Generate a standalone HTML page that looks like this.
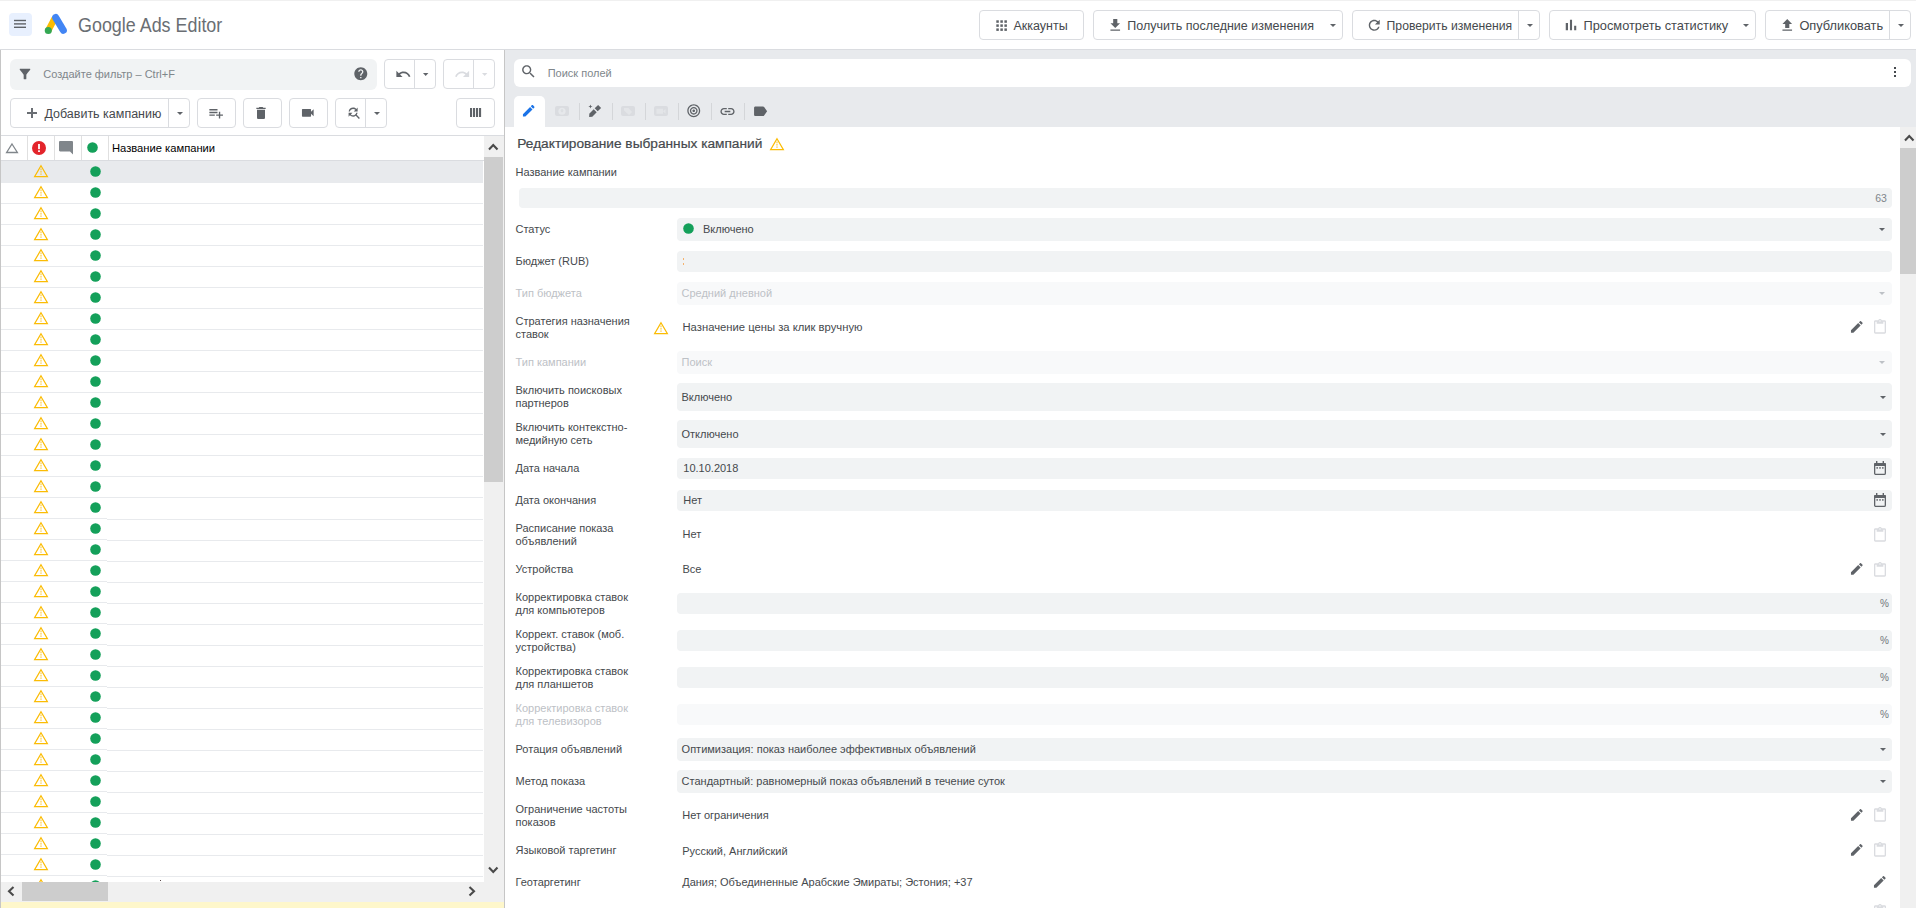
<!DOCTYPE html>
<html><head><meta charset="utf-8"><title>Google Ads Editor</title>
<style>
*{margin:0;padding:0;box-sizing:border-box}
html,body{width:1916px;height:908px;overflow:hidden;background:#fff;font-family:"Liberation Sans",sans-serif;color:#3c4043}
body{position:relative}
.a{position:absolute;display:block}
.t{position:absolute;white-space:nowrap}
.btn{position:absolute;border:1px solid #dadce0;border-radius:4px;background:#fff}
.inp{position:absolute;background:#f1f3f4;border-radius:4px}
.inpd{position:absolute;background:#f8f9fa;border-radius:4px}
</style></head><body>

<div class="a" style="left:0px;top:0px;width:1916px;height:1px;background:#f0f0f0;"></div>
<div class="a" style="left:9px;top:13px;width:23px;height:23px;background:#e8f0fe;border-radius:4px"></div>
<svg class="a" style="left:9px;top:13px;" width="23" height="23" viewBox="0 0 23 23"><rect x="5" y="6.8" width="12" height="1.4" fill="#5f6368"/><rect x="5" y="10.2" width="12" height="1.4" fill="#5f6368"/><rect x="5" y="13.6" width="12" height="1.4" fill="#5f6368"/></svg>
<svg class="a" style="left:43px;top:12px;" width="26" height="24" viewBox="0 0 26 24"><line x1="11.6" y1="6.6" x2="5.3" y2="18.5" stroke="#fbbc04" stroke-width="6.4" stroke-linecap="butt"/><line x1="12.7" y1="5.6" x2="20.3" y2="18.3" stroke="#4285f4" stroke-width="7.1" stroke-linecap="round"/><circle cx="5.3" cy="18.5" r="3.55" fill="#34a853"/></svg>
<div class="t" style="left:78px;top:15.00px;font-size:20px;line-height:20px;color:#6a6e73;font-weight:400;transform:scaleX(0.895);transform-origin:0 0">Google Ads Editor</div>
<div class="btn" style="left:979px;top:10px;width:105px;height:30px"></div>
<svg class="a" style="left:995.5px;top:19.5px;" width="11" height="11" viewBox="0 0 11 11"><rect x="0.30" y="0.30" width="2.5" height="2.5" fill="#5f6368"/><rect x="0.30" y="4.35" width="2.5" height="2.5" fill="#5f6368"/><rect x="0.30" y="8.40" width="2.5" height="2.5" fill="#5f6368"/><rect x="4.35" y="0.30" width="2.5" height="2.5" fill="#5f6368"/><rect x="4.35" y="4.35" width="2.5" height="2.5" fill="#5f6368"/><rect x="4.35" y="8.40" width="2.5" height="2.5" fill="#5f6368"/><rect x="8.40" y="0.30" width="2.5" height="2.5" fill="#5f6368"/><rect x="8.40" y="4.35" width="2.5" height="2.5" fill="#5f6368"/><rect x="8.40" y="8.40" width="2.5" height="2.5" fill="#5f6368"/></svg>
<div class="t" style="left:1013.5px;top:20.00px;font-size:12.5px;line-height:12.5px;color:#45494d;font-weight:400;">Аккаунты</div>
<div class="btn" style="left:1093px;top:10px;width:250px;height:30px"></div>
<svg class="a" style="left:1106.5px;top:16.5px;" width="16.5" height="16.5" viewBox="0 0 24 24"><path d="M19 9h-4V3H9v6H5l7 7 7-7zM5 18v2h14v-2H5z" fill="#5f6368"/></svg>
<div class="t" style="left:1127.3px;top:20.00px;font-size:12.5px;line-height:12.5px;color:#45494d;font-weight:400;">Получить последние изменения</div>
<svg class="a" style="left:1330px;top:24px;" width="6" height="3" viewBox="0 0 6 3"><polygon points="0,0 6,0 3.0,3" fill="#5f6368"/></svg>
<div class="btn" style="left:1352px;top:10px;width:188px;height:30px"></div>
<div class="a" style="left:1518px;top:11px;width:1px;height:28px;background:#dadce0;"></div>
<svg class="a" style="left:1365.5px;top:16.5px;" width="16.5" height="16.5" viewBox="0 0 24 24"><path d="M17.65 6.35C16.2 4.9 14.21 4 12 4c-4.42 0-7.99 3.58-7.99 8s3.57 8 7.99 8c3.73 0 6.84-2.55 7.73-6h-2.08c-.82 2.33-3.04 4-5.65 4-3.31 0-6-2.69-6-6s2.69-6 6-6c1.66 0 3.14.69 4.22 1.78L13 11h7V4l-2.35 2.35z" fill="#5f6368"/></svg>
<div class="t" style="left:1386.6px;top:20.00px;font-size:12.2px;line-height:12.2px;color:#45494d;font-weight:400;">Проверить изменения</div>
<svg class="a" style="left:1527px;top:24px;" width="6" height="3" viewBox="0 0 6 3"><polygon points="0,0 6,0 3.0,3" fill="#5f6368"/></svg>
<div class="btn" style="left:1549px;top:10px;width:207px;height:30px"></div>
<svg class="a" style="left:1562px;top:16px;" width="18" height="18" viewBox="0 0 24 24"><path d="M5 9.2h3V19H5zM10.6 5h2.8v14h-2.8zm5.6 8H19v6h-2.8z" fill="#5f6368"/></svg>
<div class="t" style="left:1583.5px;top:20.00px;font-size:12.8px;line-height:12.8px;color:#45494d;font-weight:400;">Просмотреть статистику</div>
<svg class="a" style="left:1743px;top:24px;" width="6" height="3" viewBox="0 0 6 3"><polygon points="0,0 6,0 3.0,3" fill="#5f6368"/></svg>
<div class="btn" style="left:1765px;top:10px;width:146px;height:30px"></div>
<div class="a" style="left:1889px;top:11px;width:1px;height:28px;background:#dadce0;"></div>
<svg class="a" style="left:1778.5px;top:16.5px;" width="16.5" height="16.5" viewBox="0 0 24 24"><path d="M5 20h14v-2H5v2zm0-10h4v6h6v-6h4l-7-7-7 7z" fill="#5f6368"/></svg>
<div class="t" style="left:1799.4px;top:20.00px;font-size:12.8px;line-height:12.8px;color:#45494d;font-weight:400;">Опубликовать</div>
<svg class="a" style="left:1898px;top:24px;" width="6" height="3" viewBox="0 0 6 3"><polygon points="0,0 6,0 3.0,3" fill="#5f6368"/></svg>
<div class="a" style="left:0px;top:49px;width:1916px;height:1px;background:#dadce0;"></div>
<div class="a" style="left:0px;top:50px;width:1px;height:858px;background:#c6c6c6;"></div>
<div class="a" style="left:504px;top:50px;width:1px;height:858px;background:#c6c6c6;"></div>
<div class="a" style="left:10px;top:59px;width:367px;height:31px;background:#f1f3f4;border-radius:6px"></div>
<svg class="a" style="left:16.5px;top:65.5px;" width="16" height="16" viewBox="0 0 24 24"><path d="M4.25 5.61C6.27 8.2 10 13 10 13v6c0 .55.45 1 1 1h2c.55 0 1-.45 1-1v-6s3.72-4.8 5.74-7.39c.51-.66.04-1.61-.79-1.61H5.04c-.83 0-1.3.95-.79 1.61z" fill="#5f6368"/></svg>
<div class="t" style="left:43.3px;top:69.00px;font-size:11px;line-height:11px;color:#80868b;font-weight:400;">Создайте фильтр – Ctrl+F</div>
<svg class="a" style="left:353.2px;top:66.2px;" width="15.6" height="15.6" viewBox="0 0 24 24"><path d="M12 2C6.48 2 2 6.48 2 12s4.48 10 10 10 10-4.48 10-10S17.52 2 12 2zm1 17h-2v-2h2v2zm2.07-7.75l-.9.92C13.45 12.9 13 13.5 13 15h-2v-.5c0-1.1.45-2.1 1.17-2.83l1.240-1.26c.37-.36.59-.86.59-1.41 0-1.1-.9-2-2-2s-2 .9-2 2H8c0-2.21 1.79-4 4-4s4 1.79 4 4c0 .88-.36 1.68-.93 2.25z" fill="#5f6368"/></svg>
<div class="btn" style="left:384px;top:59px;width:52px;height:30px"></div>
<div class="a" style="left:414px;top:60px;width:1px;height:28px;background:#dadce0;"></div>
<svg class="a" style="left:395.1px;top:65.8px;" width="16.5" height="16.5" viewBox="0 0 24 24"><path d="M12.5 8c-2.65 0-5.05.99-6.9 2.6L2 7v9h9l-3.62-3.62c1.39-1.16 3.16-1.880 5.12-1.88 3.54 0 6.55 2.31 7.6 5.5l2.37-.78C21.08 11.03 17.15 8 12.5 8z" fill="#5f6368"/></svg>
<svg class="a" style="left:423.2px;top:72.7px;" width="5.4" height="3" viewBox="0 0 5.4 3"><polygon points="0,0 5.4,0 2.7,3" fill="#5f6368"/></svg>
<div class="btn" style="left:443px;top:59px;width:52px;height:30px"></div>
<div class="a" style="left:473px;top:60px;width:1px;height:28px;background:#dadce0;"></div>
<svg class="a" style="left:454.1px;top:65.8px;" width="16.5" height="16.5" viewBox="0 0 24 24"><path d="M18.4 10.6C16.55 8.99 14.15 8 11.5 8c-4.65 0-8.58 3.03-9.96 7.22L3.9 16c1.05-3.19 4.05-5.5 7.6-5.5 1.95 0 3.73.72 5.12 1.88L13 16h9V7l-3.6 3.6z" fill="#dadce0"/></svg>
<svg class="a" style="left:482.2px;top:72.7px;" width="5.4" height="3" viewBox="0 0 5.4 3"><polygon points="0,0 5.4,0 2.7,3" fill="#dadce0"/></svg>
<div class="btn" style="left:10px;top:98px;width:180px;height:30px"></div>
<div class="a" style="left:168px;top:99px;width:1px;height:28px;background:#dadce0;"></div>
<div class="a" style="left:27px;top:112.2px;width:10px;height:1.7px;background:#6a6e73;"></div>
<div class="a" style="left:31.1px;top:108px;width:1.7px;height:10px;background:#6a6e73;"></div>
<div class="t" style="left:44.4px;top:108.00px;font-size:12.5px;line-height:12.5px;color:#45494d;font-weight:400;">Добавить кампанию</div>
<svg class="a" style="left:176.5px;top:111.5px;" width="6" height="3" viewBox="0 0 6 3"><polygon points="0,0 6,0 3.0,3" fill="#5f6368"/></svg>
<div class="btn" style="left:197px;top:98px;width:39px;height:30px"></div>
<svg class="a" style="left:207.6px;top:104.5px;" width="16.3" height="16.3" viewBox="0 0 24 24"><path d="M14 10H2v2h12v-2zm0-4H2v2h12V6zm4 8v-4h-2v4h-4v2h4v4h2v-4h4v-2h-4zM2 16h8v-2H2v2z" fill="#5f6368"/></svg>
<div class="btn" style="left:243px;top:98px;width:39px;height:30px"></div>
<svg class="a" style="left:253.3px;top:104.8px;" width="16" height="16" viewBox="0 0 24 24"><path d="M6 19c0 1.1.9 2 2 2h8c1.1 0 2-.9 2-2V7H6v12zM19 4h-3.5l-1-1h-5l-1 1H5v2h14V4z" fill="#5f6368"/></svg>
<div class="btn" style="left:289px;top:98px;width:39px;height:30px"></div>
<svg class="a" style="left:300px;top:104.9px;" width="15.6" height="15.6" viewBox="0 0 24 24"><path d="M17 10.5V7c0-.55-.45-1-1-1H4c-.55 0-1 .45-1 1v10c0 .55.45 1 1 1h12c.55 0 1-.45 1-1v-3.5l4 4v-11l-4 4z" fill="#5f6368"/></svg>
<div class="btn" style="left:335px;top:98px;width:52px;height:30px"></div>
<div class="a" style="left:365px;top:99px;width:1px;height:28px;background:#dadce0;"></div>
<svg class="a" style="left:346.2px;top:105.2px;" width="15.5" height="15.5" viewBox="0 0 24 24"><path d="M11 6c1.38 0 2.63.56 3.54 1.46L12 10h6V4l-2.05 2.05C14.68 4.78 12.930 4 11 4c-3.53 0-6.43 2.61-6.92 6H6.1c.46-2.28 2.48-4 4.9-4zm5.64 9.14c.66-.9 1.12-1.97 1.28-3.14H15.9c-.46 2.28-2.48 4-4.9 4-1.38 0-2.63-.56-3.54-1.46L10 12H4v6l2.05-2.05C7.32 17.22 9.07 18 11 18c1.55 0 2.98-.51 4.14-1.36L20 21.49 21.49 20l-4.85-4.86z" fill="#5f6368"/></svg>
<svg class="a" style="left:373.5px;top:111.5px;" width="6" height="3" viewBox="0 0 6 3"><polygon points="0,0 6,0 3.0,3" fill="#5f6368"/></svg>
<div class="btn" style="left:456px;top:98px;width:39px;height:30px"></div>
<svg class="a" style="left:470px;top:108px;" width="12" height="9" viewBox="0 0 12 9"><rect x="0" y="0" width="2.1" height="9" fill="#5f6368"/><rect x="3" y="0" width="2.1" height="9" fill="#5f6368"/><rect x="6" y="0" width="2.1" height="9" fill="#5f6368"/><rect x="9" y="0" width="2.1" height="9" fill="#5f6368"/></svg>
<div class="a" style="left:1px;top:135px;width:503px;height:1px;background:#dadce0;"></div>
<div class="a" style="left:1px;top:160px;width:483px;height:1px;background:#dadce0;"></div>
<div class="a" style="left:27px;top:136px;width:1px;height:24px;background:#e0e0e0;"></div>
<div class="a" style="left:54px;top:136px;width:1px;height:24px;background:#e0e0e0;"></div>
<div class="a" style="left:81px;top:136px;width:1px;height:24px;background:#e0e0e0;"></div>
<div class="a" style="left:108px;top:136px;width:1px;height:24px;background:#e0e0e0;"></div>
<svg class="a" style="left:5px;top:142px;" width="14" height="12" viewBox="0 0 14 12"><polygon points="7,2 12.4,10.5 1.6,10.5" fill="none" stroke="#80868b" stroke-width="1.3" stroke-linejoin="miter"/></svg>
<svg class="a" style="left:32px;top:141px;" width="14" height="14" viewBox="0 0 14 14"><circle cx="7" cy="7" r="7" fill="#e3242b"/><rect x="6.1" y="3" width="1.8" height="5.2" fill="#fff"/><rect x="6.1" y="9.3" width="1.8" height="1.7" fill="#fff"/></svg>
<svg class="a" style="left:59px;top:141px;" width="15" height="14" viewBox="0 0 15 14"><path d="M1.2 0h11.6c.7 0 1.2.5 1.2 1.2V13.5L11 10.5H1.2C.5 10.5 0 10 0 9.3V1.2C0 .5.5 0 1.2 0z" fill="#80868b"/></svg>
<svg class="a" style="left:87.2px;top:142.2px;" width="11" height="11" viewBox="0 0 11 11"><circle cx="5.5" cy="5.5" r="5.3" fill="#14a05a"/></svg>
<div class="t" style="left:112px;top:143.00px;font-size:11.2px;line-height:11.2px;color:#000;font-weight:400;">Название кампании</div>
<div class="a" style="left:1px;top:161px;width:482px;height:21px;background:#e8eaed;"></div>
<svg class="a" style="left:33px;top:163.8px;" width="16" height="14" viewBox="0 0 16 14"><polygon points="8,1.8 14.4,12.7 1.6,12.7" fill="none" stroke="#fbbc04" stroke-width="1.2"/><rect x="7.45" y="4.5" width="1.1" height="1.7" fill="#fbbc04" opacity="0.8"/><rect x="7.45" y="6.9" width="1.1" height="1.7" fill="#fbbc04" opacity="0.8"/><rect x="7.45" y="9.5" width="1.1" height="1.2" fill="#fbbc04"/></svg>
<svg class="a" style="left:89.6px;top:165.6px;" width="11" height="11" viewBox="0 0 11 11"><circle cx="5.5" cy="5.5" r="5.3" fill="#14a05a"/></svg>
<div class="a" style="left:1px;top:182px;width:106px;height:1px;background:#e8eaed;"></div>
<div class="a" style="left:107px;top:182px;width:376px;height:1px;background:#e8eaed;"></div>
<svg class="a" style="left:33px;top:184.8px;" width="16" height="14" viewBox="0 0 16 14"><polygon points="8,1.8 14.4,12.7 1.6,12.7" fill="none" stroke="#fbbc04" stroke-width="1.2"/><rect x="7.45" y="4.5" width="1.1" height="1.7" fill="#fbbc04" opacity="0.8"/><rect x="7.45" y="6.9" width="1.1" height="1.7" fill="#fbbc04" opacity="0.8"/><rect x="7.45" y="9.5" width="1.1" height="1.2" fill="#fbbc04"/></svg>
<svg class="a" style="left:89.6px;top:186.6px;" width="11" height="11" viewBox="0 0 11 11"><circle cx="5.5" cy="5.5" r="5.3" fill="#14a05a"/></svg>
<div class="a" style="left:1px;top:203px;width:106px;height:1px;background:#e8eaed;"></div>
<div class="a" style="left:107px;top:203px;width:376px;height:1px;background:#e8eaed;"></div>
<svg class="a" style="left:33px;top:205.8px;" width="16" height="14" viewBox="0 0 16 14"><polygon points="8,1.8 14.4,12.7 1.6,12.7" fill="none" stroke="#fbbc04" stroke-width="1.2"/><rect x="7.45" y="4.5" width="1.1" height="1.7" fill="#fbbc04" opacity="0.8"/><rect x="7.45" y="6.9" width="1.1" height="1.7" fill="#fbbc04" opacity="0.8"/><rect x="7.45" y="9.5" width="1.1" height="1.2" fill="#fbbc04"/></svg>
<svg class="a" style="left:89.6px;top:207.6px;" width="11" height="11" viewBox="0 0 11 11"><circle cx="5.5" cy="5.5" r="5.3" fill="#14a05a"/></svg>
<div class="a" style="left:1px;top:224px;width:106px;height:1px;background:#e8eaed;"></div>
<div class="a" style="left:107px;top:224px;width:376px;height:1px;background:#e8eaed;"></div>
<svg class="a" style="left:33px;top:226.8px;" width="16" height="14" viewBox="0 0 16 14"><polygon points="8,1.8 14.4,12.7 1.6,12.7" fill="none" stroke="#fbbc04" stroke-width="1.2"/><rect x="7.45" y="4.5" width="1.1" height="1.7" fill="#fbbc04" opacity="0.8"/><rect x="7.45" y="6.9" width="1.1" height="1.7" fill="#fbbc04" opacity="0.8"/><rect x="7.45" y="9.5" width="1.1" height="1.2" fill="#fbbc04"/></svg>
<svg class="a" style="left:89.6px;top:228.6px;" width="11" height="11" viewBox="0 0 11 11"><circle cx="5.5" cy="5.5" r="5.3" fill="#14a05a"/></svg>
<div class="a" style="left:1px;top:245px;width:106px;height:1px;background:#e8eaed;"></div>
<div class="a" style="left:107px;top:245px;width:376px;height:1px;background:#e8eaed;"></div>
<svg class="a" style="left:33px;top:247.8px;" width="16" height="14" viewBox="0 0 16 14"><polygon points="8,1.8 14.4,12.7 1.6,12.7" fill="none" stroke="#fbbc04" stroke-width="1.2"/><rect x="7.45" y="4.5" width="1.1" height="1.7" fill="#fbbc04" opacity="0.8"/><rect x="7.45" y="6.9" width="1.1" height="1.7" fill="#fbbc04" opacity="0.8"/><rect x="7.45" y="9.5" width="1.1" height="1.2" fill="#fbbc04"/></svg>
<svg class="a" style="left:89.6px;top:249.6px;" width="11" height="11" viewBox="0 0 11 11"><circle cx="5.5" cy="5.5" r="5.3" fill="#14a05a"/></svg>
<div class="a" style="left:1px;top:266px;width:106px;height:1px;background:#e8eaed;"></div>
<div class="a" style="left:107px;top:266px;width:376px;height:1px;background:#e8eaed;"></div>
<svg class="a" style="left:33px;top:268.8px;" width="16" height="14" viewBox="0 0 16 14"><polygon points="8,1.8 14.4,12.7 1.6,12.7" fill="none" stroke="#fbbc04" stroke-width="1.2"/><rect x="7.45" y="4.5" width="1.1" height="1.7" fill="#fbbc04" opacity="0.8"/><rect x="7.45" y="6.9" width="1.1" height="1.7" fill="#fbbc04" opacity="0.8"/><rect x="7.45" y="9.5" width="1.1" height="1.2" fill="#fbbc04"/></svg>
<svg class="a" style="left:89.6px;top:270.6px;" width="11" height="11" viewBox="0 0 11 11"><circle cx="5.5" cy="5.5" r="5.3" fill="#14a05a"/></svg>
<div class="a" style="left:1px;top:287px;width:106px;height:1px;background:#e8eaed;"></div>
<div class="a" style="left:107px;top:287px;width:376px;height:1px;background:#e8eaed;"></div>
<svg class="a" style="left:33px;top:289.8px;" width="16" height="14" viewBox="0 0 16 14"><polygon points="8,1.8 14.4,12.7 1.6,12.7" fill="none" stroke="#fbbc04" stroke-width="1.2"/><rect x="7.45" y="4.5" width="1.1" height="1.7" fill="#fbbc04" opacity="0.8"/><rect x="7.45" y="6.9" width="1.1" height="1.7" fill="#fbbc04" opacity="0.8"/><rect x="7.45" y="9.5" width="1.1" height="1.2" fill="#fbbc04"/></svg>
<svg class="a" style="left:89.6px;top:291.6px;" width="11" height="11" viewBox="0 0 11 11"><circle cx="5.5" cy="5.5" r="5.3" fill="#14a05a"/></svg>
<div class="a" style="left:1px;top:308px;width:106px;height:1px;background:#e8eaed;"></div>
<div class="a" style="left:107px;top:308px;width:376px;height:1px;background:#e8eaed;"></div>
<svg class="a" style="left:33px;top:310.8px;" width="16" height="14" viewBox="0 0 16 14"><polygon points="8,1.8 14.4,12.7 1.6,12.7" fill="none" stroke="#fbbc04" stroke-width="1.2"/><rect x="7.45" y="4.5" width="1.1" height="1.7" fill="#fbbc04" opacity="0.8"/><rect x="7.45" y="6.9" width="1.1" height="1.7" fill="#fbbc04" opacity="0.8"/><rect x="7.45" y="9.5" width="1.1" height="1.2" fill="#fbbc04"/></svg>
<svg class="a" style="left:89.6px;top:312.6px;" width="11" height="11" viewBox="0 0 11 11"><circle cx="5.5" cy="5.5" r="5.3" fill="#14a05a"/></svg>
<div class="a" style="left:1px;top:329px;width:106px;height:1px;background:#e8eaed;"></div>
<div class="a" style="left:107px;top:329px;width:376px;height:1px;background:#e8eaed;"></div>
<svg class="a" style="left:33px;top:331.8px;" width="16" height="14" viewBox="0 0 16 14"><polygon points="8,1.8 14.4,12.7 1.6,12.7" fill="none" stroke="#fbbc04" stroke-width="1.2"/><rect x="7.45" y="4.5" width="1.1" height="1.7" fill="#fbbc04" opacity="0.8"/><rect x="7.45" y="6.9" width="1.1" height="1.7" fill="#fbbc04" opacity="0.8"/><rect x="7.45" y="9.5" width="1.1" height="1.2" fill="#fbbc04"/></svg>
<svg class="a" style="left:89.6px;top:333.6px;" width="11" height="11" viewBox="0 0 11 11"><circle cx="5.5" cy="5.5" r="5.3" fill="#14a05a"/></svg>
<div class="a" style="left:1px;top:350px;width:106px;height:1px;background:#e8eaed;"></div>
<div class="a" style="left:107px;top:350px;width:376px;height:1px;background:#e8eaed;"></div>
<svg class="a" style="left:33px;top:352.8px;" width="16" height="14" viewBox="0 0 16 14"><polygon points="8,1.8 14.4,12.7 1.6,12.7" fill="none" stroke="#fbbc04" stroke-width="1.2"/><rect x="7.45" y="4.5" width="1.1" height="1.7" fill="#fbbc04" opacity="0.8"/><rect x="7.45" y="6.9" width="1.1" height="1.7" fill="#fbbc04" opacity="0.8"/><rect x="7.45" y="9.5" width="1.1" height="1.2" fill="#fbbc04"/></svg>
<svg class="a" style="left:89.6px;top:354.6px;" width="11" height="11" viewBox="0 0 11 11"><circle cx="5.5" cy="5.5" r="5.3" fill="#14a05a"/></svg>
<div class="a" style="left:1px;top:371px;width:106px;height:1px;background:#e8eaed;"></div>
<div class="a" style="left:107px;top:371px;width:376px;height:1px;background:#e8eaed;"></div>
<svg class="a" style="left:33px;top:373.8px;" width="16" height="14" viewBox="0 0 16 14"><polygon points="8,1.8 14.4,12.7 1.6,12.7" fill="none" stroke="#fbbc04" stroke-width="1.2"/><rect x="7.45" y="4.5" width="1.1" height="1.7" fill="#fbbc04" opacity="0.8"/><rect x="7.45" y="6.9" width="1.1" height="1.7" fill="#fbbc04" opacity="0.8"/><rect x="7.45" y="9.5" width="1.1" height="1.2" fill="#fbbc04"/></svg>
<svg class="a" style="left:89.6px;top:375.6px;" width="11" height="11" viewBox="0 0 11 11"><circle cx="5.5" cy="5.5" r="5.3" fill="#14a05a"/></svg>
<div class="a" style="left:1px;top:392px;width:106px;height:1px;background:#e8eaed;"></div>
<div class="a" style="left:107px;top:392px;width:376px;height:1px;background:#e8eaed;"></div>
<svg class="a" style="left:33px;top:394.8px;" width="16" height="14" viewBox="0 0 16 14"><polygon points="8,1.8 14.4,12.7 1.6,12.7" fill="none" stroke="#fbbc04" stroke-width="1.2"/><rect x="7.45" y="4.5" width="1.1" height="1.7" fill="#fbbc04" opacity="0.8"/><rect x="7.45" y="6.9" width="1.1" height="1.7" fill="#fbbc04" opacity="0.8"/><rect x="7.45" y="9.5" width="1.1" height="1.2" fill="#fbbc04"/></svg>
<svg class="a" style="left:89.6px;top:396.6px;" width="11" height="11" viewBox="0 0 11 11"><circle cx="5.5" cy="5.5" r="5.3" fill="#14a05a"/></svg>
<div class="a" style="left:1px;top:413px;width:106px;height:1px;background:#e8eaed;"></div>
<div class="a" style="left:107px;top:413px;width:376px;height:1px;background:#e8eaed;"></div>
<svg class="a" style="left:33px;top:415.8px;" width="16" height="14" viewBox="0 0 16 14"><polygon points="8,1.8 14.4,12.7 1.6,12.7" fill="none" stroke="#fbbc04" stroke-width="1.2"/><rect x="7.45" y="4.5" width="1.1" height="1.7" fill="#fbbc04" opacity="0.8"/><rect x="7.45" y="6.9" width="1.1" height="1.7" fill="#fbbc04" opacity="0.8"/><rect x="7.45" y="9.5" width="1.1" height="1.2" fill="#fbbc04"/></svg>
<svg class="a" style="left:89.6px;top:417.6px;" width="11" height="11" viewBox="0 0 11 11"><circle cx="5.5" cy="5.5" r="5.3" fill="#14a05a"/></svg>
<div class="a" style="left:1px;top:434px;width:106px;height:1px;background:#e8eaed;"></div>
<div class="a" style="left:107px;top:434px;width:376px;height:1px;background:#e8eaed;"></div>
<svg class="a" style="left:33px;top:436.8px;" width="16" height="14" viewBox="0 0 16 14"><polygon points="8,1.8 14.4,12.7 1.6,12.7" fill="none" stroke="#fbbc04" stroke-width="1.2"/><rect x="7.45" y="4.5" width="1.1" height="1.7" fill="#fbbc04" opacity="0.8"/><rect x="7.45" y="6.9" width="1.1" height="1.7" fill="#fbbc04" opacity="0.8"/><rect x="7.45" y="9.5" width="1.1" height="1.2" fill="#fbbc04"/></svg>
<svg class="a" style="left:89.6px;top:438.6px;" width="11" height="11" viewBox="0 0 11 11"><circle cx="5.5" cy="5.5" r="5.3" fill="#14a05a"/></svg>
<div class="a" style="left:1px;top:455px;width:106px;height:1px;background:#e8eaed;"></div>
<div class="a" style="left:107px;top:455px;width:376px;height:1px;background:#e8eaed;"></div>
<svg class="a" style="left:33px;top:457.8px;" width="16" height="14" viewBox="0 0 16 14"><polygon points="8,1.8 14.4,12.7 1.6,12.7" fill="none" stroke="#fbbc04" stroke-width="1.2"/><rect x="7.45" y="4.5" width="1.1" height="1.7" fill="#fbbc04" opacity="0.8"/><rect x="7.45" y="6.9" width="1.1" height="1.7" fill="#fbbc04" opacity="0.8"/><rect x="7.45" y="9.5" width="1.1" height="1.2" fill="#fbbc04"/></svg>
<svg class="a" style="left:89.6px;top:459.6px;" width="11" height="11" viewBox="0 0 11 11"><circle cx="5.5" cy="5.5" r="5.3" fill="#14a05a"/></svg>
<div class="a" style="left:1px;top:476px;width:106px;height:1px;background:#e8eaed;"></div>
<div class="a" style="left:107px;top:476px;width:376px;height:1px;background:#e8eaed;"></div>
<svg class="a" style="left:33px;top:478.8px;" width="16" height="14" viewBox="0 0 16 14"><polygon points="8,1.8 14.4,12.7 1.6,12.7" fill="none" stroke="#fbbc04" stroke-width="1.2"/><rect x="7.45" y="4.5" width="1.1" height="1.7" fill="#fbbc04" opacity="0.8"/><rect x="7.45" y="6.9" width="1.1" height="1.7" fill="#fbbc04" opacity="0.8"/><rect x="7.45" y="9.5" width="1.1" height="1.2" fill="#fbbc04"/></svg>
<svg class="a" style="left:89.6px;top:480.6px;" width="11" height="11" viewBox="0 0 11 11"><circle cx="5.5" cy="5.5" r="5.3" fill="#14a05a"/></svg>
<div class="a" style="left:1px;top:497px;width:106px;height:1px;background:#e8eaed;"></div>
<div class="a" style="left:107px;top:497px;width:376px;height:1px;background:#e8eaed;"></div>
<svg class="a" style="left:33px;top:499.8px;" width="16" height="14" viewBox="0 0 16 14"><polygon points="8,1.8 14.4,12.7 1.6,12.7" fill="none" stroke="#fbbc04" stroke-width="1.2"/><rect x="7.45" y="4.5" width="1.1" height="1.7" fill="#fbbc04" opacity="0.8"/><rect x="7.45" y="6.9" width="1.1" height="1.7" fill="#fbbc04" opacity="0.8"/><rect x="7.45" y="9.5" width="1.1" height="1.2" fill="#fbbc04"/></svg>
<svg class="a" style="left:89.6px;top:501.6px;" width="11" height="11" viewBox="0 0 11 11"><circle cx="5.5" cy="5.5" r="5.3" fill="#14a05a"/></svg>
<div class="a" style="left:1px;top:518px;width:106px;height:1px;background:#e8eaed;"></div>
<div class="a" style="left:107px;top:519px;width:376px;height:1px;background:#e8eaed;"></div>
<svg class="a" style="left:33px;top:520.8px;" width="16" height="14" viewBox="0 0 16 14"><polygon points="8,1.8 14.4,12.7 1.6,12.7" fill="none" stroke="#fbbc04" stroke-width="1.2"/><rect x="7.45" y="4.5" width="1.1" height="1.7" fill="#fbbc04" opacity="0.8"/><rect x="7.45" y="6.9" width="1.1" height="1.7" fill="#fbbc04" opacity="0.8"/><rect x="7.45" y="9.5" width="1.1" height="1.2" fill="#fbbc04"/></svg>
<svg class="a" style="left:89.6px;top:522.6px;" width="11" height="11" viewBox="0 0 11 11"><circle cx="5.5" cy="5.5" r="5.3" fill="#14a05a"/></svg>
<div class="a" style="left:1px;top:539px;width:106px;height:1px;background:#e8eaed;"></div>
<div class="a" style="left:107px;top:540px;width:376px;height:1px;background:#e8eaed;"></div>
<svg class="a" style="left:33px;top:541.8px;" width="16" height="14" viewBox="0 0 16 14"><polygon points="8,1.8 14.4,12.7 1.6,12.7" fill="none" stroke="#fbbc04" stroke-width="1.2"/><rect x="7.45" y="4.5" width="1.1" height="1.7" fill="#fbbc04" opacity="0.8"/><rect x="7.45" y="6.9" width="1.1" height="1.7" fill="#fbbc04" opacity="0.8"/><rect x="7.45" y="9.5" width="1.1" height="1.2" fill="#fbbc04"/></svg>
<svg class="a" style="left:89.6px;top:543.6px;" width="11" height="11" viewBox="0 0 11 11"><circle cx="5.5" cy="5.5" r="5.3" fill="#14a05a"/></svg>
<div class="a" style="left:1px;top:560px;width:106px;height:1px;background:#e8eaed;"></div>
<div class="a" style="left:107px;top:561px;width:376px;height:1px;background:#e8eaed;"></div>
<svg class="a" style="left:33px;top:562.8px;" width="16" height="14" viewBox="0 0 16 14"><polygon points="8,1.8 14.4,12.7 1.6,12.7" fill="none" stroke="#fbbc04" stroke-width="1.2"/><rect x="7.45" y="4.5" width="1.1" height="1.7" fill="#fbbc04" opacity="0.8"/><rect x="7.45" y="6.9" width="1.1" height="1.7" fill="#fbbc04" opacity="0.8"/><rect x="7.45" y="9.5" width="1.1" height="1.2" fill="#fbbc04"/></svg>
<svg class="a" style="left:89.6px;top:564.6px;" width="11" height="11" viewBox="0 0 11 11"><circle cx="5.5" cy="5.5" r="5.3" fill="#14a05a"/></svg>
<div class="a" style="left:1px;top:581px;width:106px;height:1px;background:#e8eaed;"></div>
<div class="a" style="left:107px;top:582px;width:376px;height:1px;background:#e8eaed;"></div>
<svg class="a" style="left:33px;top:583.8px;" width="16" height="14" viewBox="0 0 16 14"><polygon points="8,1.8 14.4,12.7 1.6,12.7" fill="none" stroke="#fbbc04" stroke-width="1.2"/><rect x="7.45" y="4.5" width="1.1" height="1.7" fill="#fbbc04" opacity="0.8"/><rect x="7.45" y="6.9" width="1.1" height="1.7" fill="#fbbc04" opacity="0.8"/><rect x="7.45" y="9.5" width="1.1" height="1.2" fill="#fbbc04"/></svg>
<svg class="a" style="left:89.6px;top:585.6px;" width="11" height="11" viewBox="0 0 11 11"><circle cx="5.5" cy="5.5" r="5.3" fill="#14a05a"/></svg>
<div class="a" style="left:1px;top:602px;width:106px;height:1px;background:#e8eaed;"></div>
<div class="a" style="left:107px;top:603px;width:376px;height:1px;background:#e8eaed;"></div>
<svg class="a" style="left:33px;top:604.8px;" width="16" height="14" viewBox="0 0 16 14"><polygon points="8,1.8 14.4,12.7 1.6,12.7" fill="none" stroke="#fbbc04" stroke-width="1.2"/><rect x="7.45" y="4.5" width="1.1" height="1.7" fill="#fbbc04" opacity="0.8"/><rect x="7.45" y="6.9" width="1.1" height="1.7" fill="#fbbc04" opacity="0.8"/><rect x="7.45" y="9.5" width="1.1" height="1.2" fill="#fbbc04"/></svg>
<svg class="a" style="left:89.6px;top:606.6px;" width="11" height="11" viewBox="0 0 11 11"><circle cx="5.5" cy="5.5" r="5.3" fill="#14a05a"/></svg>
<div class="a" style="left:1px;top:623px;width:106px;height:1px;background:#e8eaed;"></div>
<div class="a" style="left:107px;top:624px;width:376px;height:1px;background:#e8eaed;"></div>
<svg class="a" style="left:33px;top:625.8px;" width="16" height="14" viewBox="0 0 16 14"><polygon points="8,1.8 14.4,12.7 1.6,12.7" fill="none" stroke="#fbbc04" stroke-width="1.2"/><rect x="7.45" y="4.5" width="1.1" height="1.7" fill="#fbbc04" opacity="0.8"/><rect x="7.45" y="6.9" width="1.1" height="1.7" fill="#fbbc04" opacity="0.8"/><rect x="7.45" y="9.5" width="1.1" height="1.2" fill="#fbbc04"/></svg>
<svg class="a" style="left:89.6px;top:627.6px;" width="11" height="11" viewBox="0 0 11 11"><circle cx="5.5" cy="5.5" r="5.3" fill="#14a05a"/></svg>
<div class="a" style="left:1px;top:644px;width:106px;height:1px;background:#e8eaed;"></div>
<div class="a" style="left:107px;top:645px;width:376px;height:1px;background:#e8eaed;"></div>
<svg class="a" style="left:33px;top:646.8px;" width="16" height="14" viewBox="0 0 16 14"><polygon points="8,1.8 14.4,12.7 1.6,12.7" fill="none" stroke="#fbbc04" stroke-width="1.2"/><rect x="7.45" y="4.5" width="1.1" height="1.7" fill="#fbbc04" opacity="0.8"/><rect x="7.45" y="6.9" width="1.1" height="1.7" fill="#fbbc04" opacity="0.8"/><rect x="7.45" y="9.5" width="1.1" height="1.2" fill="#fbbc04"/></svg>
<svg class="a" style="left:89.6px;top:648.6px;" width="11" height="11" viewBox="0 0 11 11"><circle cx="5.5" cy="5.5" r="5.3" fill="#14a05a"/></svg>
<div class="a" style="left:1px;top:665px;width:106px;height:1px;background:#e8eaed;"></div>
<div class="a" style="left:107px;top:666px;width:376px;height:1px;background:#e8eaed;"></div>
<svg class="a" style="left:33px;top:667.8px;" width="16" height="14" viewBox="0 0 16 14"><polygon points="8,1.8 14.4,12.7 1.6,12.7" fill="none" stroke="#fbbc04" stroke-width="1.2"/><rect x="7.45" y="4.5" width="1.1" height="1.7" fill="#fbbc04" opacity="0.8"/><rect x="7.45" y="6.9" width="1.1" height="1.7" fill="#fbbc04" opacity="0.8"/><rect x="7.45" y="9.5" width="1.1" height="1.2" fill="#fbbc04"/></svg>
<svg class="a" style="left:89.6px;top:669.6px;" width="11" height="11" viewBox="0 0 11 11"><circle cx="5.5" cy="5.5" r="5.3" fill="#14a05a"/></svg>
<div class="a" style="left:1px;top:686px;width:106px;height:1px;background:#e8eaed;"></div>
<div class="a" style="left:107px;top:687px;width:376px;height:1px;background:#e8eaed;"></div>
<svg class="a" style="left:33px;top:688.8px;" width="16" height="14" viewBox="0 0 16 14"><polygon points="8,1.8 14.4,12.7 1.6,12.7" fill="none" stroke="#fbbc04" stroke-width="1.2"/><rect x="7.45" y="4.5" width="1.1" height="1.7" fill="#fbbc04" opacity="0.8"/><rect x="7.45" y="6.9" width="1.1" height="1.7" fill="#fbbc04" opacity="0.8"/><rect x="7.45" y="9.5" width="1.1" height="1.2" fill="#fbbc04"/></svg>
<svg class="a" style="left:89.6px;top:690.6px;" width="11" height="11" viewBox="0 0 11 11"><circle cx="5.5" cy="5.5" r="5.3" fill="#14a05a"/></svg>
<div class="a" style="left:1px;top:707px;width:106px;height:1px;background:#e8eaed;"></div>
<div class="a" style="left:107px;top:708px;width:376px;height:1px;background:#e8eaed;"></div>
<svg class="a" style="left:33px;top:709.8px;" width="16" height="14" viewBox="0 0 16 14"><polygon points="8,1.8 14.4,12.7 1.6,12.7" fill="none" stroke="#fbbc04" stroke-width="1.2"/><rect x="7.45" y="4.5" width="1.1" height="1.7" fill="#fbbc04" opacity="0.8"/><rect x="7.45" y="6.9" width="1.1" height="1.7" fill="#fbbc04" opacity="0.8"/><rect x="7.45" y="9.5" width="1.1" height="1.2" fill="#fbbc04"/></svg>
<svg class="a" style="left:89.6px;top:711.6px;" width="11" height="11" viewBox="0 0 11 11"><circle cx="5.5" cy="5.5" r="5.3" fill="#14a05a"/></svg>
<div class="a" style="left:1px;top:728px;width:106px;height:1px;background:#e8eaed;"></div>
<div class="a" style="left:107px;top:729px;width:376px;height:1px;background:#e8eaed;"></div>
<svg class="a" style="left:33px;top:730.8px;" width="16" height="14" viewBox="0 0 16 14"><polygon points="8,1.8 14.4,12.7 1.6,12.7" fill="none" stroke="#fbbc04" stroke-width="1.2"/><rect x="7.45" y="4.5" width="1.1" height="1.7" fill="#fbbc04" opacity="0.8"/><rect x="7.45" y="6.9" width="1.1" height="1.7" fill="#fbbc04" opacity="0.8"/><rect x="7.45" y="9.5" width="1.1" height="1.2" fill="#fbbc04"/></svg>
<svg class="a" style="left:89.6px;top:732.6px;" width="11" height="11" viewBox="0 0 11 11"><circle cx="5.5" cy="5.5" r="5.3" fill="#14a05a"/></svg>
<div class="a" style="left:1px;top:749px;width:106px;height:1px;background:#e8eaed;"></div>
<div class="a" style="left:107px;top:750px;width:376px;height:1px;background:#e8eaed;"></div>
<svg class="a" style="left:33px;top:751.8px;" width="16" height="14" viewBox="0 0 16 14"><polygon points="8,1.8 14.4,12.7 1.6,12.7" fill="none" stroke="#fbbc04" stroke-width="1.2"/><rect x="7.45" y="4.5" width="1.1" height="1.7" fill="#fbbc04" opacity="0.8"/><rect x="7.45" y="6.9" width="1.1" height="1.7" fill="#fbbc04" opacity="0.8"/><rect x="7.45" y="9.5" width="1.1" height="1.2" fill="#fbbc04"/></svg>
<svg class="a" style="left:89.6px;top:753.6px;" width="11" height="11" viewBox="0 0 11 11"><circle cx="5.5" cy="5.5" r="5.3" fill="#14a05a"/></svg>
<div class="a" style="left:1px;top:770px;width:106px;height:1px;background:#e8eaed;"></div>
<div class="a" style="left:107px;top:771px;width:376px;height:1px;background:#e8eaed;"></div>
<svg class="a" style="left:33px;top:772.8px;" width="16" height="14" viewBox="0 0 16 14"><polygon points="8,1.8 14.4,12.7 1.6,12.7" fill="none" stroke="#fbbc04" stroke-width="1.2"/><rect x="7.45" y="4.5" width="1.1" height="1.7" fill="#fbbc04" opacity="0.8"/><rect x="7.45" y="6.9" width="1.1" height="1.7" fill="#fbbc04" opacity="0.8"/><rect x="7.45" y="9.5" width="1.1" height="1.2" fill="#fbbc04"/></svg>
<svg class="a" style="left:89.6px;top:774.6px;" width="11" height="11" viewBox="0 0 11 11"><circle cx="5.5" cy="5.5" r="5.3" fill="#14a05a"/></svg>
<div class="a" style="left:1px;top:791px;width:106px;height:1px;background:#e8eaed;"></div>
<div class="a" style="left:107px;top:792px;width:376px;height:1px;background:#e8eaed;"></div>
<svg class="a" style="left:33px;top:793.8px;" width="16" height="14" viewBox="0 0 16 14"><polygon points="8,1.8 14.4,12.7 1.6,12.7" fill="none" stroke="#fbbc04" stroke-width="1.2"/><rect x="7.45" y="4.5" width="1.1" height="1.7" fill="#fbbc04" opacity="0.8"/><rect x="7.45" y="6.9" width="1.1" height="1.7" fill="#fbbc04" opacity="0.8"/><rect x="7.45" y="9.5" width="1.1" height="1.2" fill="#fbbc04"/></svg>
<svg class="a" style="left:89.6px;top:795.6px;" width="11" height="11" viewBox="0 0 11 11"><circle cx="5.5" cy="5.5" r="5.3" fill="#14a05a"/></svg>
<div class="a" style="left:1px;top:812px;width:106px;height:1px;background:#e8eaed;"></div>
<div class="a" style="left:107px;top:813px;width:376px;height:1px;background:#e8eaed;"></div>
<svg class="a" style="left:33px;top:814.8px;" width="16" height="14" viewBox="0 0 16 14"><polygon points="8,1.8 14.4,12.7 1.6,12.7" fill="none" stroke="#fbbc04" stroke-width="1.2"/><rect x="7.45" y="4.5" width="1.1" height="1.7" fill="#fbbc04" opacity="0.8"/><rect x="7.45" y="6.9" width="1.1" height="1.7" fill="#fbbc04" opacity="0.8"/><rect x="7.45" y="9.5" width="1.1" height="1.2" fill="#fbbc04"/></svg>
<svg class="a" style="left:89.6px;top:816.6px;" width="11" height="11" viewBox="0 0 11 11"><circle cx="5.5" cy="5.5" r="5.3" fill="#14a05a"/></svg>
<div class="a" style="left:1px;top:833px;width:106px;height:1px;background:#e8eaed;"></div>
<div class="a" style="left:107px;top:834px;width:376px;height:1px;background:#e8eaed;"></div>
<svg class="a" style="left:33px;top:835.8px;" width="16" height="14" viewBox="0 0 16 14"><polygon points="8,1.8 14.4,12.7 1.6,12.7" fill="none" stroke="#fbbc04" stroke-width="1.2"/><rect x="7.45" y="4.5" width="1.1" height="1.7" fill="#fbbc04" opacity="0.8"/><rect x="7.45" y="6.9" width="1.1" height="1.7" fill="#fbbc04" opacity="0.8"/><rect x="7.45" y="9.5" width="1.1" height="1.2" fill="#fbbc04"/></svg>
<svg class="a" style="left:89.6px;top:837.6px;" width="11" height="11" viewBox="0 0 11 11"><circle cx="5.5" cy="5.5" r="5.3" fill="#14a05a"/></svg>
<div class="a" style="left:1px;top:854px;width:106px;height:1px;background:#e8eaed;"></div>
<div class="a" style="left:107px;top:855px;width:376px;height:1px;background:#e8eaed;"></div>
<svg class="a" style="left:33px;top:856.8px;" width="16" height="14" viewBox="0 0 16 14"><polygon points="8,1.8 14.4,12.7 1.6,12.7" fill="none" stroke="#fbbc04" stroke-width="1.2"/><rect x="7.45" y="4.5" width="1.1" height="1.7" fill="#fbbc04" opacity="0.8"/><rect x="7.45" y="6.9" width="1.1" height="1.7" fill="#fbbc04" opacity="0.8"/><rect x="7.45" y="9.5" width="1.1" height="1.2" fill="#fbbc04"/></svg>
<svg class="a" style="left:89.6px;top:858.6px;" width="11" height="11" viewBox="0 0 11 11"><circle cx="5.5" cy="5.5" r="5.3" fill="#14a05a"/></svg>
<div class="a" style="left:1px;top:875px;width:106px;height:1px;background:#e8eaed;"></div>
<div class="a" style="left:107px;top:876px;width:376px;height:1px;background:#e8eaed;"></div>
<svg class="a" style="left:33px;top:877.8px;" width="16" height="14" viewBox="0 0 16 14"><polygon points="8,1.8 14.4,12.7 1.6,12.7" fill="none" stroke="#fbbc04" stroke-width="1.2"/><rect x="7.45" y="4.5" width="1.1" height="1.7" fill="#fbbc04" opacity="0.8"/><rect x="7.45" y="6.9" width="1.1" height="1.7" fill="#fbbc04" opacity="0.8"/><rect x="7.45" y="9.5" width="1.1" height="1.2" fill="#fbbc04"/></svg>
<svg class="a" style="left:89.6px;top:879.6px;" width="11" height="11" viewBox="0 0 11 11"><circle cx="5.5" cy="5.5" r="5.3" fill="#14a05a"/></svg>
<div class="a" style="left:160px;top:880px;width:1.2px;height:1.2px;background:#5a4a4a;"></div>
<div class="a" style="left:484px;top:136px;width:20px;height:746px;background:#f0f0f0;"></div>
<div class="a" style="left:484px;top:157px;width:19px;height:325px;background:#cdcdcd;"></div>
<svg class="a" style="left:488px;top:142px;" width="11" height="9" viewBox="0 0 11 9"><polyline points="1,7.5 5.25,3 9.5,7.5" fill="none" stroke="#4a4a4a" stroke-width="2.1"/></svg>
<svg class="a" style="left:488px;top:866px;" width="11" height="9" viewBox="0 0 11 9"><polyline points="1,1.5 5.25,6 9.5,1.5" fill="none" stroke="#4a4a4a" stroke-width="2.1"/></svg>
<div class="a" style="left:1px;top:882px;width:503px;height:20px;background:#f0f0f0;"></div>
<div class="a" style="left:22px;top:882px;width:86px;height:19px;background:#cdcdcd;"></div>
<svg class="a" style="left:6px;top:886px;" width="9" height="11" viewBox="0 0 9 11"><polyline points="7.5,1 3,5.25 7.5,9.5" fill="none" stroke="#4a4a4a" stroke-width="2.1"/></svg>
<svg class="a" style="left:468px;top:886px;" width="9" height="11" viewBox="0 0 9 11"><polyline points="1.5,1 6,5.25 1.5,9.5" fill="none" stroke="#4a4a4a" stroke-width="2.1"/></svg>
<div class="a" style="left:1px;top:902px;width:503px;height:6px;background:#fef7cb;"></div>
<div class="a" style="left:505px;top:50px;width:1411px;height:77px;background:#e8eaed;"></div>
<div class="a" style="left:514px;top:59px;width:1397px;height:28px;background:#fff;border-radius:6px"></div>
<svg class="a" style="left:519.5px;top:62.5px;" width="17" height="17" viewBox="0 0 24 24"><path d="M15.5 14h-.79l-.28-.27C15.41 12.59 16 11.11 16 9.5 16 5.91 13.09 3 9.5 3S3 5.91 3 9.5 5.91 16 9.5 16c1.61 0 3.09-.59 4.23-1.57l.27.28v.79l5 4.99L20.49 19l-4.99-5zm-6 0C7.01 14 5 11.99 5 9.5S7.01 5 9.5 5 14 7.01 14 9.5 11.99 14 9.5 14z" fill="#5f6368"/></svg>
<div class="t" style="left:547.7px;top:68.00px;font-size:11px;line-height:11px;color:#80868b;font-weight:400;">Поиск полей</div>
<div class="a" style="left:1894px;top:67px;width:2px;height:2px;background:#45494d;"></div>
<div class="a" style="left:1894px;top:71px;width:2px;height:2px;background:#45494d;"></div>
<div class="a" style="left:1894px;top:75px;width:2px;height:2px;background:#45494d;"></div>
<div class="a" style="left:514px;top:96px;width:31px;height:31px;background:#fff;border-radius:5px 5px 0 0"></div>
<svg class="a" style="left:521px;top:102.5px;" width="15.5" height="15.5" viewBox="0 0 24 24"><path d="M3 17.25V21h3.75L17.81 9.94l-3.75-3.75L3 17.25zM20.71 7.04c.39-.39.39-1.02 0-1.41l-2.34-2.34c-.39-.39-1.02-.39-1.41 0l-1.83 1.83 3.75 3.75 1.83-1.83z" fill="#1a73e8"/></svg>
<div class="a" style="left:579px;top:103px;width:1px;height:17px;background:#d4d6d9;"></div>
<div class="a" style="left:612px;top:103px;width:1px;height:17px;background:#d4d6d9;"></div>
<div class="a" style="left:645px;top:103px;width:1px;height:17px;background:#d4d6d9;"></div>
<div class="a" style="left:678px;top:103px;width:1px;height:17px;background:#d4d6d9;"></div>
<div class="a" style="left:711px;top:103px;width:1px;height:17px;background:#d4d6d9;"></div>
<div class="a" style="left:744px;top:103px;width:1px;height:17px;background:#d4d6d9;"></div>
<div class="a" style="left:555px;top:105.5px;width:14px;height:10.5px;background:#dadce0;border-radius:2px"></div>
<div class="a" style="left:621px;top:105.5px;width:14px;height:10.5px;background:#dadce0;border-radius:2px"></div>
<div class="a" style="left:654px;top:105.5px;width:14px;height:10.5px;background:#dadce0;border-radius:2px"></div>
<svg class="a" style="left:555px;top:105.5px;" width="14" height="10.5" viewBox="0 0 14 10.5"><circle cx="7" cy="5.25" r="3.6" fill="#e6e8eb"/><polygon points="5.2,4.6 8.8,4.6 7,6.6" fill="#dadce0"/><rect x="6.4" y="3" width="1.2" height="2" fill="#dadce0"/></svg>
<svg class="a" style="left:621px;top:105.5px;" width="14" height="10.5" viewBox="0 0 14 10.5"><polygon points="3,2 7.5,2 11,6 8,9 3,4.5" fill="#e3e5e8"/></svg>
<svg class="a" style="left:654px;top:105.5px;" width="14" height="10.5" viewBox="0 0 14 10.5"><rect x="2.5" y="2.8" width="6.5" height="5" fill="#e3e5e8"/><polygon points="9,5.3 11.5,3 11.5,7.6" fill="#e3e5e8"/></svg>
<svg class="a" style="left:584px;top:101px;" width="22" height="20" viewBox="0 0 22 20"><polygon points="5.3,12.7 9.7,8.3 12.7,11.3 8.3,15.7 5.1,15.9" fill="#5f6368"/><polygon points="10.7,7.3 14.1,3.9 17.1,6.9 13.7,10.3" fill="#5f6368"/><path d="M6.4 3.4L7.0 4.9L8.5 5.5L7.0 6.1L6.4 7.6L5.8 6.1L4.3 5.5L5.8 4.9Z" fill="#5f6368"/></svg>
<svg class="a" style="left:686.2px;top:103.2px;" width="15.5" height="15.5" viewBox="0 0 24 24"><path d="M12 2C6.49 2 2 6.49 2 12s4.49 10 10 10 10-4.49 10-10S17.51 2 12 2zm0 18c-4.41 0-8-3.59-8-8s3.59-8 8-8 8 3.59 8 8-3.59 8-8 8zm0-14c-3.31 0-6 2.69-6 6s2.69 6 6 6 6-2.69 6-6-2.69-6-6-6zm0 10c-2.21 0-4-1.79-4-4s1.79-4 4-4 4 1.79 4 4-1.79 4-4 4zm0-6c-1.1 0-2 .9-2 2s.9 2 2 2 2-.9 2-2-.9-2-2-2z" fill="#5f6368"/></svg>
<svg class="a" style="left:718.5px;top:102.5px;" width="17" height="17" viewBox="0 0 24 24"><path d="M3.9 12c0-1.71 1.39-3.1 3.1-3.1h4V7H7c-2.76 0-5 2.24-5 5s2.24 5 5 5h4v-1.9H7c-1.71 0-3.1-1.39-3.1-3.1zM8 13h8v-2H8v2zm9-6h-4v1.9h4c1.71 0 3.1 1.39 3.1 3.1s-1.39 3.1-3.1 3.1h-4V17h4c2.76 0 5-2.24 5-5s-2.24-5-5-5z" fill="#5f6368"/></svg>
<svg class="a" style="left:752px;top:102.5px;" width="16.5" height="16.5" viewBox="0 0 24 24"><path d="M17.63 5.84C17.27 5.33 16.67 5 16 5L5 5.01C3.9 5.01 3 5.9 3 7v10c0 1.1.9 1.99 2 1.99L16 19c.67 0 1.27-.33 1.63-.84L22 12l-4.37-6.16z" fill="#5f6368"/></svg>
<div class="t" style="left:517.3px;top:137.00px;font-size:13.7px;line-height:13.7px;color:#45494d;font-weight:400;-webkit-text-stroke:0.2px #45494d">Редактирование выбранных кампаний</div>
<svg class="a" style="left:769px;top:136.9px;" width="16" height="14" viewBox="0 0 16 14"><polygon points="8,1.8 14.4,12.7 1.6,12.7" fill="none" stroke="#fbbc04" stroke-width="1.2"/><rect x="7.45" y="4.5" width="1.1" height="1.7" fill="#fbbc04" opacity="0.8"/><rect x="7.45" y="6.9" width="1.1" height="1.7" fill="#fbbc04" opacity="0.8"/><rect x="7.45" y="9.5" width="1.1" height="1.2" fill="#fbbc04"/></svg>
<div class="t" style="left:515.5px;top:167.00px;font-size:11px;line-height:11px;color:#45494d;font-weight:400;">Название кампании</div>
<div class="inp" style="left:519px;top:188px;width:1373px;height:20px"></div>
<div class="t" style="left:1875.2px;top:193.00px;font-size:10.5px;line-height:10.5px;color:#80868b;font-weight:400;">63</div>
<div class="t" style="left:515.5px;top:224.00px;font-size:11px;line-height:11px;color:#45494d;font-weight:400;">Статус</div>
<div class="inp" style="left:677px;top:218px;width:1215px;height:23px"></div>
<svg class="a" style="left:683.2px;top:223.2px;" width="11" height="11" viewBox="0 0 11 11"><circle cx="5.5" cy="5.5" r="5.3" fill="#14a05a"/></svg>
<div class="t" style="left:703px;top:224.00px;font-size:11px;line-height:11px;color:#45494d;font-weight:400;">Включено</div>
<svg class="a" style="left:1879px;top:228px;" width="6" height="3" viewBox="0 0 6 3"><polygon points="0,0 6,0 3.0,3" fill="#5f6368"/></svg>
<div class="t" style="left:515.5px;top:256.00px;font-size:11px;line-height:11px;color:#45494d;font-weight:400;">Бюджет (RUB)</div>
<div class="inp" style="left:677px;top:251px;width:1215px;height:21px"></div>
<div class="a" style="left:682.8px;top:257.6px;width:1.1px;height:2px;background:#f6b26b;"></div>
<div class="a" style="left:682.8px;top:263.4px;width:1.1px;height:2px;background:#f6b26b;"></div>
<div class="t" style="left:515.5px;top:288.00px;font-size:11px;line-height:11px;color:#bdc1c6;font-weight:400;">Тип бюджета</div>
<div class="inpd" style="left:677px;top:282px;width:1215px;height:23px"></div>
<div class="t" style="left:681.5px;top:288.00px;font-size:11px;line-height:11px;color:#bdc1c6;font-weight:400;">Средний дневной</div>
<svg class="a" style="left:1879px;top:292px;" width="6" height="3" viewBox="0 0 6 3"><polygon points="0,0 6,0 3.0,3" fill="#bdc1c6"/></svg>
<div class="t" style="left:515.5px;top:316.00px;font-size:11px;line-height:11px;color:#45494d;font-weight:400;">Стратегия назначения</div>
<div class="t" style="left:515.5px;top:329.00px;font-size:11px;line-height:11px;color:#45494d;font-weight:400;">ставок</div>
<svg class="a" style="left:653px;top:320.5px;" width="16" height="14" viewBox="0 0 16 14"><polygon points="8,1.8 14.4,12.7 1.6,12.7" fill="none" stroke="#fbbc04" stroke-width="1.2"/><rect x="7.45" y="4.5" width="1.1" height="1.7" fill="#fbbc04" opacity="0.8"/><rect x="7.45" y="6.9" width="1.1" height="1.7" fill="#fbbc04" opacity="0.8"/><rect x="7.45" y="9.5" width="1.1" height="1.2" fill="#fbbc04"/></svg>
<div class="t" style="left:682.5px;top:322.00px;font-size:11.25px;line-height:11.25px;color:#45494d;font-weight:400;">Назначение цены за клик вручную</div>
<svg class="a" style="left:1849px;top:318.9px;" width="15.7" height="15.7" viewBox="0 0 24 24"><path d="M3 17.25V21h3.75L17.81 9.94l-3.75-3.75L3 17.25zM20.71 7.04c.39-.39.39-1.02 0-1.41l-2.34-2.34c-.39-.39-1.02-.39-1.41 0l-1.83 1.83 3.75 3.75 1.83-1.83z" fill="#5f6368"/></svg>
<svg class="a" style="left:1872px;top:319.1px;" width="16" height="16" viewBox="0 0 24 24"><path d="M19 2h-4.18C14.4.84 13.3 0 12 0S9.6.84 9.18 2H5c-1.1 0-2 .9-2 2v16c0 1.1.9 2 2 2h14c1.1 0 2-.9 2-2V4c0-1.1-.9-2-2-2zm-7 0c.55 0 1 .45 1 1s-.45 1-1 1-1-.45-1-1 .45-1 1-1zm7 18H5V4h2v3h10V4h2v16z" fill="#dadce0"/></svg>
<div class="t" style="left:515.5px;top:357.00px;font-size:11px;line-height:11px;color:#bdc1c6;font-weight:400;">Тип кампании</div>
<div class="inpd" style="left:677px;top:351px;width:1215px;height:23px"></div>
<div class="t" style="left:681.5px;top:357.00px;font-size:11px;line-height:11px;color:#bdc1c6;font-weight:400;">Поиск</div>
<svg class="a" style="left:1879px;top:361px;" width="6" height="3" viewBox="0 0 6 3"><polygon points="0,0 6,0 3.0,3" fill="#bdc1c6"/></svg>
<div class="t" style="left:515.5px;top:385.00px;font-size:11px;line-height:11px;color:#45494d;font-weight:400;">Включить поисковых</div>
<div class="t" style="left:515.5px;top:398.00px;font-size:11px;line-height:11px;color:#45494d;font-weight:400;">партнеров</div>
<div class="inp" style="left:677px;top:383px;width:1215px;height:28px"></div>
<div class="t" style="left:681.5px;top:392.00px;font-size:11px;line-height:11px;color:#45494d;font-weight:400;">Включено</div>
<svg class="a" style="left:1879.5px;top:395.5px;" width="6" height="3" viewBox="0 0 6 3"><polygon points="0,0 6,0 3.0,3" fill="#5f6368"/></svg>
<div class="t" style="left:515.5px;top:422.00px;font-size:11px;line-height:11px;color:#45494d;font-weight:400;">Включить контекстно-</div>
<div class="t" style="left:515.5px;top:435.00px;font-size:11px;line-height:11px;color:#45494d;font-weight:400;">медийную сеть</div>
<div class="inp" style="left:677px;top:420px;width:1215px;height:28px"></div>
<div class="t" style="left:681.5px;top:429.00px;font-size:11px;line-height:11px;color:#45494d;font-weight:400;">Отключено</div>
<svg class="a" style="left:1879.5px;top:432.5px;" width="6" height="3" viewBox="0 0 6 3"><polygon points="0,0 6,0 3.0,3" fill="#5f6368"/></svg>
<div class="t" style="left:515.5px;top:463.00px;font-size:11px;line-height:11px;color:#45494d;font-weight:400;">Дата начала</div>
<div class="inp" style="left:677px;top:458px;width:1215px;height:21px"></div>
<div class="t" style="left:683.3px;top:463.00px;font-size:11px;line-height:11px;color:#45494d;font-weight:400;">10.10.2018</div>
<svg class="a" style="left:1874px;top:461px;" width="12" height="14" viewBox="0 0 12 14"><rect x="0.65" y="2.55" width="10.7" height="10.8" rx="1.2" fill="none" stroke="#5f6368" stroke-width="1.3"/><rect x="0" y="1.9" width="12" height="3.1" rx="1" fill="#5f6368"/><rect x="2" y="0" width="1.4" height="2.5" fill="#5f6368"/><rect x="8.6" y="0" width="1.4" height="2.5" fill="#5f6368"/><rect x="2.5" y="6" width="1.3" height="1.8" fill="#5f6368"/><rect x="5.35" y="6" width="1.3" height="1.8" fill="#5f6368"/><rect x="8.2" y="6" width="1.3" height="1.8" fill="#5f6368"/></svg>
<div class="t" style="left:515.5px;top:495.00px;font-size:11px;line-height:11px;color:#45494d;font-weight:400;">Дата окончания</div>
<div class="inp" style="left:677px;top:490px;width:1215px;height:21px"></div>
<div class="t" style="left:683.3px;top:495.00px;font-size:11px;line-height:11px;color:#45494d;font-weight:400;">Нет</div>
<svg class="a" style="left:1874px;top:493px;" width="12" height="14" viewBox="0 0 12 14"><rect x="0.65" y="2.55" width="10.7" height="10.8" rx="1.2" fill="none" stroke="#5f6368" stroke-width="1.3"/><rect x="0" y="1.9" width="12" height="3.1" rx="1" fill="#5f6368"/><rect x="2" y="0" width="1.4" height="2.5" fill="#5f6368"/><rect x="8.6" y="0" width="1.4" height="2.5" fill="#5f6368"/><rect x="2.5" y="6" width="1.3" height="1.8" fill="#5f6368"/><rect x="5.35" y="6" width="1.3" height="1.8" fill="#5f6368"/><rect x="8.2" y="6" width="1.3" height="1.8" fill="#5f6368"/></svg>
<div class="t" style="left:515.5px;top:523.00px;font-size:11px;line-height:11px;color:#45494d;font-weight:400;">Расписание показа</div>
<div class="t" style="left:515.5px;top:536.00px;font-size:11px;line-height:11px;color:#45494d;font-weight:400;">объявлений</div>
<div class="t" style="left:682.5px;top:529.00px;font-size:11px;line-height:11px;color:#45494d;font-weight:400;">Нет</div>
<svg class="a" style="left:1872px;top:527.1px;" width="16" height="16" viewBox="0 0 24 24"><path d="M19 2h-4.18C14.4.84 13.3 0 12 0S9.6.84 9.18 2H5c-1.1 0-2 .9-2 2v16c0 1.1.9 2 2 2h14c1.1 0 2-.9 2-2V4c0-1.1-.9-2-2-2zm-7 0c.55 0 1 .45 1 1s-.45 1-1 1-1-.45-1-1 .45-1 1-1zm7 18H5V4h2v3h10V4h2v16z" fill="#dadce0"/></svg>
<div class="t" style="left:515.5px;top:564.00px;font-size:11px;line-height:11px;color:#45494d;font-weight:400;">Устройства</div>
<div class="t" style="left:682.5px;top:564.00px;font-size:11px;line-height:11px;color:#45494d;font-weight:400;">Все</div>
<svg class="a" style="left:1849px;top:560.9px;" width="15.7" height="15.7" viewBox="0 0 24 24"><path d="M3 17.25V21h3.75L17.81 9.94l-3.75-3.75L3 17.25zM20.71 7.04c.39-.39.39-1.02 0-1.41l-2.34-2.34c-.39-.39-1.02-.39-1.41 0l-1.83 1.83 3.75 3.75 1.83-1.83z" fill="#5f6368"/></svg>
<svg class="a" style="left:1872px;top:562.1px;" width="16" height="16" viewBox="0 0 24 24"><path d="M19 2h-4.18C14.4.84 13.3 0 12 0S9.6.84 9.18 2H5c-1.1 0-2 .9-2 2v16c0 1.1.9 2 2 2h14c1.1 0 2-.9 2-2V4c0-1.1-.9-2-2-2zm-7 0c.55 0 1 .45 1 1s-.45 1-1 1-1-.45-1-1 .45-1 1-1zm7 18H5V4h2v3h10V4h2v16z" fill="#dadce0"/></svg>
<div class="t" style="left:515.5px;top:592.00px;font-size:11px;line-height:11px;color:#45494d;font-weight:400;">Корректировка ставок</div>
<div class="t" style="left:515.5px;top:605.00px;font-size:11px;line-height:11px;color:#45494d;font-weight:400;">для компьютеров</div>
<div class="inp" style="left:677px;top:593px;width:1215px;height:21px"></div>
<div class="t" style="left:1880px;top:599.00px;font-size:10px;line-height:10px;color:#70757a;font-weight:400;">%</div>
<div class="t" style="left:515.5px;top:629.00px;font-size:11px;line-height:11px;color:#45494d;font-weight:400;">Коррект. ставок (моб.</div>
<div class="t" style="left:515.5px;top:642.00px;font-size:11px;line-height:11px;color:#45494d;font-weight:400;">устройства)</div>
<div class="inp" style="left:677px;top:630px;width:1215px;height:21px"></div>
<div class="t" style="left:1880px;top:636.00px;font-size:10px;line-height:10px;color:#70757a;font-weight:400;">%</div>
<div class="t" style="left:515.5px;top:666.00px;font-size:11px;line-height:11px;color:#45494d;font-weight:400;">Корректировка ставок</div>
<div class="t" style="left:515.5px;top:679.00px;font-size:11px;line-height:11px;color:#45494d;font-weight:400;">для планшетов</div>
<div class="inp" style="left:677px;top:667px;width:1215px;height:21px"></div>
<div class="t" style="left:1880px;top:673.00px;font-size:10px;line-height:10px;color:#70757a;font-weight:400;">%</div>
<div class="t" style="left:515.5px;top:703.00px;font-size:11px;line-height:11px;color:#bdc1c6;font-weight:400;">Корректировка ставок</div>
<div class="t" style="left:515.5px;top:716.00px;font-size:11px;line-height:11px;color:#bdc1c6;font-weight:400;">для телевизоров</div>
<div class="inpd" style="left:677px;top:704px;width:1215px;height:21px"></div>
<div class="t" style="left:1880px;top:710.00px;font-size:10px;line-height:10px;color:#70757a;font-weight:400;">%</div>
<div class="t" style="left:515.5px;top:744.00px;font-size:11px;line-height:11px;color:#45494d;font-weight:400;">Ротация объявлений</div>
<div class="inp" style="left:677px;top:738px;width:1215px;height:23px"></div>
<div class="t" style="left:681.6px;top:744.00px;font-size:11px;line-height:11px;color:#45494d;font-weight:400;">Оптимизация: показ наиболее эффективных объявлений</div>
<svg class="a" style="left:1879.5px;top:748px;" width="6" height="3" viewBox="0 0 6 3"><polygon points="0,0 6,0 3.0,3" fill="#5f6368"/></svg>
<div class="t" style="left:515.5px;top:776.00px;font-size:11px;line-height:11px;color:#45494d;font-weight:400;">Метод показа</div>
<div class="inp" style="left:677px;top:770px;width:1215px;height:23px"></div>
<div class="t" style="left:681.6px;top:776.00px;font-size:11px;line-height:11px;color:#45494d;font-weight:400;">Стандартный: равномерный показ объявлений в течение суток</div>
<svg class="a" style="left:1879.5px;top:780px;" width="6" height="3" viewBox="0 0 6 3"><polygon points="0,0 6,0 3.0,3" fill="#5f6368"/></svg>
<div class="t" style="left:515.5px;top:804.00px;font-size:11px;line-height:11px;color:#45494d;font-weight:400;">Ограничение частоты</div>
<div class="t" style="left:515.5px;top:817.00px;font-size:11px;line-height:11px;color:#45494d;font-weight:400;">показов</div>
<div class="t" style="left:682.2px;top:810.00px;font-size:11px;line-height:11px;color:#45494d;font-weight:400;">Нет ограничения</div>
<svg class="a" style="left:1849px;top:806.9px;" width="15.7" height="15.7" viewBox="0 0 24 24"><path d="M3 17.25V21h3.75L17.81 9.94l-3.75-3.75L3 17.25zM20.71 7.04c.39-.39.39-1.02 0-1.41l-2.34-2.34c-.39-.39-1.02-.39-1.41 0l-1.83 1.83 3.75 3.75 1.83-1.83z" fill="#5f6368"/></svg>
<svg class="a" style="left:1872px;top:807.1px;" width="16" height="16" viewBox="0 0 24 24"><path d="M19 2h-4.18C14.4.84 13.3 0 12 0S9.6.84 9.18 2H5c-1.1 0-2 .9-2 2v16c0 1.1.9 2 2 2h14c1.1 0 2-.9 2-2V4c0-1.1-.9-2-2-2zm-7 0c.55 0 1 .45 1 1s-.45 1-1 1-1-.45-1-1 .45-1 1-1zm7 18H5V4h2v3h10V4h2v16z" fill="#dadce0"/></svg>
<div class="t" style="left:515.5px;top:845.00px;font-size:11px;line-height:11px;color:#45494d;font-weight:400;">Языковой таргетинг</div>
<div class="t" style="left:682.2px;top:846.00px;font-size:11px;line-height:11px;color:#45494d;font-weight:400;">Русский, Английский</div>
<svg class="a" style="left:1849px;top:841.9px;" width="15.7" height="15.7" viewBox="0 0 24 24"><path d="M3 17.25V21h3.75L17.81 9.94l-3.75-3.75L3 17.25zM20.71 7.04c.39-.39.39-1.02 0-1.41l-2.34-2.34c-.39-.39-1.02-.39-1.41 0l-1.83 1.83 3.75 3.75 1.83-1.83z" fill="#5f6368"/></svg>
<svg class="a" style="left:1872px;top:842.1px;" width="16" height="16" viewBox="0 0 24 24"><path d="M19 2h-4.18C14.4.84 13.3 0 12 0S9.6.84 9.18 2H5c-1.1 0-2 .9-2 2v16c0 1.1.9 2 2 2h14c1.1 0 2-.9 2-2V4c0-1.1-.9-2-2-2zm-7 0c.55 0 1 .45 1 1s-.45 1-1 1-1-.45-1-1 .45-1 1-1zm7 18H5V4h2v3h10V4h2v16z" fill="#dadce0"/></svg>
<div class="t" style="left:515.5px;top:877.00px;font-size:11px;line-height:11px;color:#45494d;font-weight:400;">Геотаргетинг</div>
<div class="t" style="left:682.2px;top:877.00px;font-size:11px;line-height:11px;color:#45494d;font-weight:400;">Дания; Объединенные Арабские Эмираты; Эстония; +37</div>
<svg class="a" style="left:1872px;top:873.9px;" width="15.7" height="15.7" viewBox="0 0 24 24"><path d="M3 17.25V21h3.75L17.81 9.94l-3.75-3.75L3 17.25zM20.71 7.04c.39-.39.39-1.02 0-1.41l-2.34-2.34c-.39-.39-1.02-.39-1.41 0l-1.83 1.83 3.75 3.75 1.83-1.83z" fill="#5f6368"/></svg>
<svg class="a" style="left:1872px;top:904.1px;" width="16" height="16" viewBox="0 0 24 24"><path d="M19 2h-4.18C14.4.84 13.3 0 12 0S9.6.84 9.18 2H5c-1.1 0-2 .9-2 2v16c0 1.1.9 2 2 2h14c1.1 0 2-.9 2-2V4c0-1.1-.9-2-2-2zm-7 0c.55 0 1 .45 1 1s-.45 1-1 1-1-.45-1-1 .45-1 1-1zm7 18H5V4h2v3h10V4h2v16z" fill="#dadce0"/></svg>
<div class="a" style="left:1900px;top:127px;width:16px;height:781px;background:#f0f0f0;"></div>
<div class="a" style="left:1900px;top:148px;width:16px;height:126px;background:#cdcdcd;"></div>
<svg class="a" style="left:1904px;top:133px;" width="11" height="9" viewBox="0 0 11 9"><polyline points="1,7.5 5.25,3 9.5,7.5" fill="none" stroke="#4a4a4a" stroke-width="2.1"/></svg>
</body></html>
